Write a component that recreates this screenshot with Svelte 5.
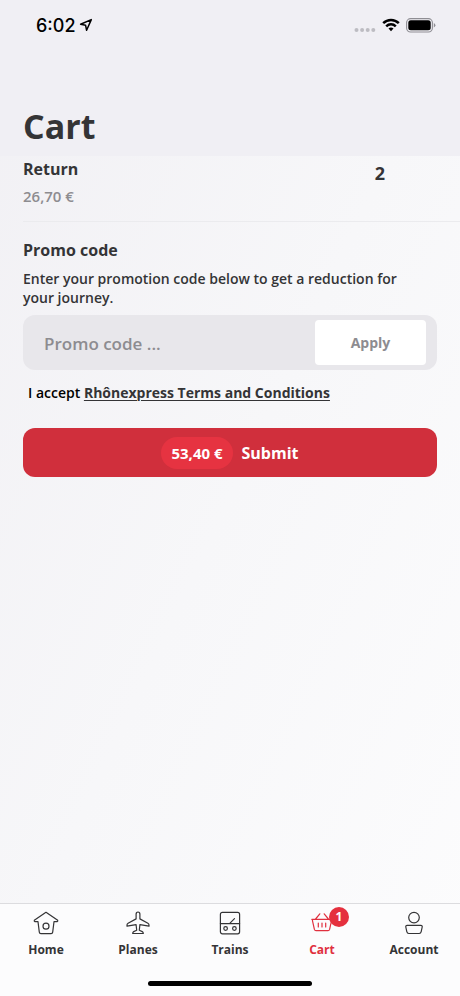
<script lang="ts">
	let promoCode = $state('');
	let active = $state('Cart');

	const item = { name: 'Return', price: '26,70 €', quantity: 2 };
	const total = '53,40 €';
	const cartCount = 1;
	const tabs = ['Home', 'Planes', 'Trains', 'Cart', 'Account'];
</script>

<svelte:head>
	<title>Cart</title>
</svelte:head>

<div class="screen">
	<header class="header">
		<div class="status">
			<div class="status-time">
				<span>6:02</span>
				<svg width="14" height="14" viewBox="0 0 14 14" fill="none" stroke="#000" stroke-width="1.5" stroke-linejoin="round">
					<path d="M12.3 1.6 1.6 6.3l5 1 1 5z" />
				</svg>
			</div>
			<div class="status-icons">
				<svg width="22" height="6" viewBox="0 0 22 6" fill="#bdbcc2">
					<circle cx="2.5" cy="3" r="2" />
					<circle cx="8.1" cy="3" r="2" />
					<circle cx="13.7" cy="3" r="2" />
					<circle cx="19.3" cy="3" r="2" />
				</svg>
				<svg width="18" height="14" viewBox="0 0 18 14" fill="none" stroke="#000" stroke-width="2.5">
					<path d="M1.2 5.2C5.6.8 12.4.8 16.8 5.2" />
					<path d="M4.2 8.3c2.7-2.6 6.9-2.6 9.6 0" />
					<path d="M6.5 10.6c1.4-1.4 3.6-1.4 5 0L9 13.2z" fill="#000" stroke="none" />
				</svg>
				<svg width="30" height="15" viewBox="0 0 30 15">
					<rect x=".6" y=".6" width="25.8" height="13.4" rx="4" fill="none" stroke="#8f8e94" stroke-width="1.1" />
					<rect x="2.3" y="2.3" width="22.4" height="10" rx="2.5" />
					<path d="M27.8 5v4.6q1.6-.8 1.6-2.3T27.8 5z" fill="#8f8e94" />
				</svg>
			</div>
		</div>
		<h1>Cart</h1>
	</header>

	<main class="content">
		<section class="item">
			<div>
				<h2>{item.name}</h2>
				<p class="price">{item.price}</p>
			</div>
			<span class="quantity">{item.quantity}</span>
		</section>

		<section class="promo">
			<h2>Promo code</h2>
			<p class="promo-text">Enter your promotion code below to get a reduction for your journey.</p>
			<form class="promo-form" onsubmit={(e) => e.preventDefault()}>
				<input type="text" aria-label="Promo code" placeholder="Promo code ..." bind:value={promoCode} />
				<button type="submit">Apply</button>
			</form>
		</section>

		<p class="terms">I accept <a href="#terms">Rhônexpress Terms and Conditions</a></p>

		<button type="button" class="submit">
			<span class="total">{total}</span>
			<span>Submit</span>
		</button>
	</main>

	<footer class="footer">
		<nav class="tabs">
			{#each tabs as tab}
				<a
					href="#{tab.toLowerCase()}"
					class="tab"
					class:active={active === tab}
					onclick={() => (active = tab)}
				>
					<span class="icon">
						<svg width="26" height="26" viewBox="0 0 26 26" fill="none" stroke="currentColor" stroke-width="1.2" stroke-linejoin="round" stroke-linecap="round">
							{#if tab === 'Home'}
								<path d="M13 2.3 1.3 10.2q-.3 1.2.6 1.5H5l1.3 10.4q.2 1.5 1.6 1.5h10.2q1.4 0 1.6-1.5L21 11.7h3.1q.9-.3.6-1.5z" />
								<circle cx="13" cy="16.2" r="3" />
							{:else if tab === 'Planes'}
								<path d="M13 2c1.3 0 1.9 1 1.9 2.2v4.7l8 4.3c.9.5 1.1 1 1.1 1.8v1.2l-9.1-1.5-.6 5.6 3 1.3c.8.4 1 .9 1 1.9H7.7c0-1 .2-1.5 1-1.9l3-1.3-.6-5.6L2 16.2V15c0-.8.2-1.3 1.1-1.8l8-4.3V4.2C11.1 3 11.7 2 13 2z" />
							{:else if tab === 'Trains'}
								<rect x="3.4" y="2.4" width="19.2" height="21.4" rx="2" />
								<path d="M3.4 13.6h19.2M13 13.2l4.5-4.5" />
								<circle cx="8.6" cy="18.5" r="1.8" />
								<circle cx="17.4" cy="18.5" r="1.8" />
							{:else if tab === 'Cart'}
								<path d="M4.8 9.3h16.4c1 0 1.5.6 1.3 1.5l-1.9 8.6c-.2.8-.8 1.3-1.6 1.3H7c-.8 0-1.4-.5-1.6-1.3L3.5 10.8c-.2-.9.3-1.5 1.3-1.5zM2.8 9.3h20.4M6.6 9l4.2-5.2M19.4 9l-4.2-5.2M9.3 13v4M13 13v4M16.7 13v4" />
							{:else}
								<circle cx="13" cy="7.6" r="5.3" />
								<path d="M6.2 15.4h13.6c1.2 0 1.6.6 1.4 1.6l-1 4.7c-.3 1.3-.9 1.8-2 1.8H7.8c-1.1 0-1.7-.5-2-1.8l-1-4.7c-.2-1 .2-1.6 1.4-1.6z" />
							{/if}
						</svg>
						{#if tab === 'Cart'}
							<span class="badge">{cartCount}</span>
						{/if}
					</span>
					{tab}
				</a>
			{/each}
		</nav>
		<div class="home-bar"></div>
	</footer>
</div>

<style>
	:global(body) {
		margin: 0;
	}
	.screen {
		min-height: 100vh;
		display: flex;
		flex-direction: column;
		font-family: 'Open Sans', 'Noto Sans', sans-serif;
		color: #343436;
		background: linear-gradient(115deg, #f1f0f4 0%, #f7f7f9 50%, #fcfcfd 100%);
	}
	h1,
	h2,
	p {
		margin: 0;
	}
	.header {
		height: 156px;
		box-sizing: border-box;
		display: flex;
		flex-direction: column;
		justify-content: space-between;
		padding: 13px 23px 8px;
		background: #f0eff4;
	}
	.status {
		display: flex;
		justify-content: space-between;
		align-items: center;
		height: 24px;
		padding-left: 13px;
	}
	.status-time,
	.status-icons {
		display: flex;
		align-items: center;
	}
	.status-time {
		gap: 3px;
		font: 500 18px 'Inter', sans-serif;
		color: #000;
	}
	.status-icons {
		gap: 6px;
		padding-right: 1px;
	}
	.status-icons svg:first-child {
		align-self: flex-end;
	}
	h1 {
		font-size: 34px;
		line-height: 44px;
		font-weight: 700;
	}
	h2 {
		font-size: 16px;
		line-height: 24px;
		font-weight: 700;
	}
	.content {
		flex: 1;
		padding: 0 23px;
	}
	/* the divider runs out to the right edge of the screen */
	.item {
		display: flex;
		justify-content: space-between;
		align-items: flex-start;
		margin-right: -23px;
		padding: 1px 75px 12px 0;
		border-bottom: 1px solid #ebebee;
	}
	.price {
		margin-top: 3px;
		padding-bottom: 1px;
		font-size: 15px;
		line-height: 24px;
		font-weight: 600;
		color: #8d8c90;
	}
	.quantity {
		margin-top: 4px;
		font-size: 18px;
		line-height: 24px;
		font-weight: 700;
	}
	.promo {
		padding-top: 16px;
	}
	.promo-text {
		margin-top: 7px;
		padding-right: 40px;
		font-size: 14px;
		line-height: 19px;
		font-weight: 600;
	}
	.promo-form {
		display: flex;
		height: 55px;
		box-sizing: border-box;
		margin-top: 8px;
		padding: 5px 11px 5px 21px;
		border-radius: 12px;
		background: #e8e7eb;
	}
	.promo-form input {
		flex: 1;
		min-width: 0;
		padding: 2px 0 0;
		border: 0;
		outline: 0;
		background: none;
		font: 600 17px 'Open Sans', sans-serif;
		color: #343436;
	}
	.promo-form input::placeholder {
		color: #8d8c90;
		opacity: 1;
	}
	.promo-form button {
		width: 111px;
		border: 0;
		border-radius: 4px;
		background: #fff;
		font: 700 14px 'Open Sans', sans-serif;
		color: #8d8c90;
	}
	.terms {
		margin-top: 11px;
		padding-left: 5px;
		font-size: 14px;
		line-height: 24px;
		font-weight: 600;
		color: #000;
	}
	.terms a {
		color: #343436;
		font-weight: 700;
		text-decoration-thickness: 1px;
		text-underline-offset: 2px;
	}
	.submit {
		display: flex;
		align-items: center;
		justify-content: center;
		gap: 9px;
		width: 100%;
		height: 49px;
		margin-top: 23px;
		border: 0;
		border-radius: 12px;
		background: #d02f3c;
		font: 700 16px 'Open Sans', sans-serif;
		color: #fff;
	}
	.total {
		padding: 0 10px;
		border-radius: 16px;
		background: #e63341;
		font-size: 15px;
		line-height: 32px;
	}
	.footer {
		border-top: 1px solid #dcdcdf;
		background: #fcfcfd;
	}
	.tabs {
		display: flex;
	}
	.tab {
		flex: 1;
		display: flex;
		flex-direction: column;
		align-items: center;
		gap: 4px;
		padding-top: 6px;
		font-size: 12px;
		line-height: 20px;
		font-weight: 700;
		color: #343436;
		text-decoration: none;
	}
	.active {
		color: #e0303f;
	}
	.icon {
		position: relative;
		height: 26px;
	}
	.badge {
		position: absolute;
		top: -3px;
		left: 20px;
		width: 20px;
		border-radius: 10px;
		background: #e5303e;
		color: #fff;
		text-align: center;
	}
	.home-bar {
		width: 164px;
		height: 5px;
		margin: 21px auto 10px;
		border-radius: 3px;
		background: #000;
	}
</style>
